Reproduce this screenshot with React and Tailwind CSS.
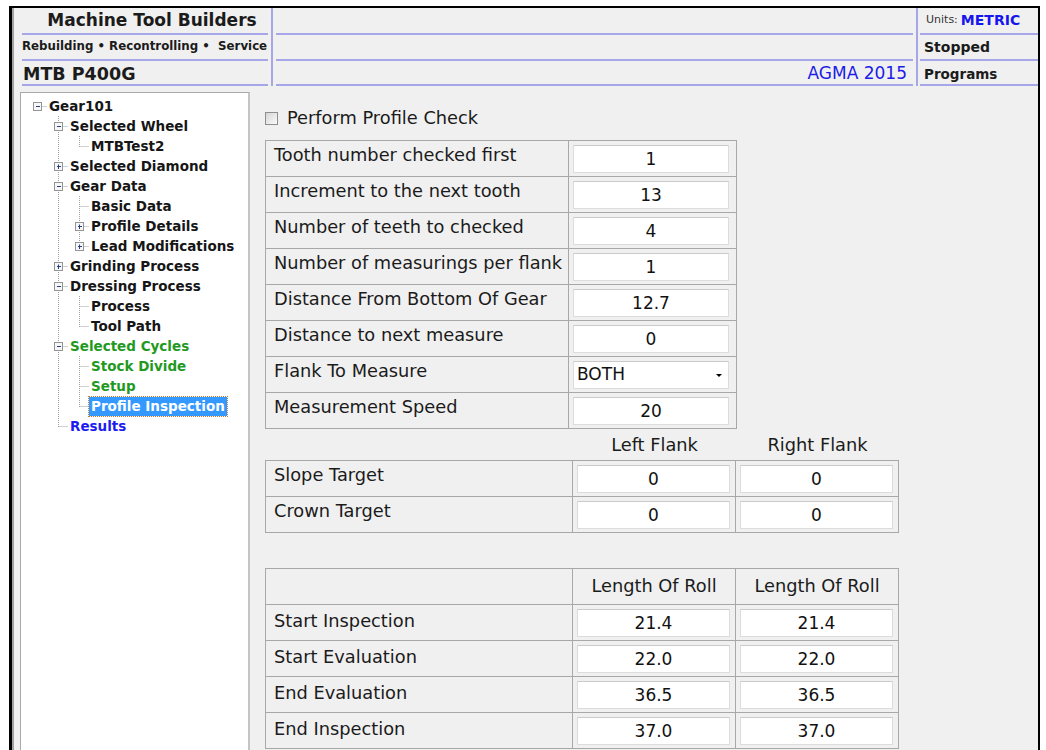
import React from "react";

// nodes of the job tree; `open` is set only on nodes that have children
const tree = [
  { label: "Gear101", depth: 0, open: true },
  { label: "Selected Wheel", depth: 1, open: true },
  { label: "MTBTest2", depth: 2, last: true },
  { label: "Selected Diamond", depth: 1, open: false },
  { label: "Gear Data", depth: 1, open: true },
  { label: "Basic Data", depth: 2 },
  { label: "Profile Details", depth: 2, open: false },
  { label: "Lead Modifications", depth: 2, open: false, last: true },
  { label: "Grinding Process", depth: 1, open: false },
  { label: "Dressing Process", depth: 1, open: true },
  { label: "Process", depth: 2 },
  { label: "Tool Path", depth: 2, last: true },
  { label: "Selected Cycles", depth: 1, open: true, tone: "green" },
  { label: "Stock Divide", depth: 2, tone: "green" },
  { label: "Setup", depth: 2, tone: "green" },
  { label: "Profile Inspection", depth: 2, last: true, selected: true },
  { label: "Results", depth: 1, last: true, tone: "blue" },
];

const checks = [
  ["Tooth number checked first", "1"],
  ["Increment to the next tooth", "13"],
  ["Number of teeth to checked", "4"],
  ["Number of measurings per flank", "1"],
  ["Distance From Bottom Of Gear", "12.7"],
  ["Distance to next measure", "0"],
  ["Flank To Measure", "BOTH", true],
  ["Measurement Speed", "20"],
];

const targets = [
  ["Slope Target", "0", "0"],
  ["Crown Target", "0", "0"],
];

const rolls = [
  ["Start Inspection", "21.4", "21.4"],
  ["Start Evaluation", "22.0", "22.0"],
  ["End Evaluation", "36.5", "36.5"],
  ["End Inspection", "37.0", "37.0"],
];

const col = (l) => 16 + 21 * l;

function Gutter({ depth, open, last }) {
  const cx = col(depth);
  const c = cx + 0.5;
  const w = cx + 10;
  const dots = { stroke: "#a3a3a3", strokeWidth: 1, strokeDasharray: "1 1" };
  return (
    <svg width={w} height="20" className="shrink-0">
      {depth >= 2 && <line x1={col(1) + 0.5} y1="0" x2={col(1) + 0.5} y2="20" {...dots} />}
      {depth >= 1 && <line x1={c} y1="0" x2={c} y2={last ? 11 : 20} {...dots} />}
      <line x1={c} y1="10.5" x2={w} y2="10.5" {...dots} />
      {open !== undefined && (
        <g>
          <rect x={cx - 3.5} y="6.5" width="8" height="8" fill="#f6f6f6" stroke="#959595" />
          <line x1={cx - 1} y1="10.5" x2={cx + 3} y2="10.5" stroke="#27408b" />
          {!open && <line x1={c} y1="8.5" x2={c} y2="13" stroke="#27408b" />}
        </g>
      )}
    </svg>
  );
}

function TreeRow({ node }) {
  const tone =
    node.selected
      ? "bg-[#3399ff] text-white outline-1 outline-dotted outline-[#c87a36]"
      : node.tone === "green"
      ? "text-[#1f9a1f]"
      : node.tone === "blue"
      ? "text-[#1c1cf0]"
      : "text-[#161616]";
  return (
    <div className="flex items-center h-[20px]">
      <Gutter depth={node.depth} open={node.open} last={node.last} />
      <span className={`px-[2px] h-[19px] leading-[19px] whitespace-nowrap ${tone}`}>{node.label}</span>
    </div>
  );
}

function Field({ value, select, wide }) {
  return (
    <div
      className={`h-[28px] ${wide ? "w-[156px]" : "w-[153px]"} bg-white border border-[#dcdcdc] border-t-[#cacaca] flex items-center text-[17px] text-[#111] ${
        select ? "justify-between pl-[3px] pr-[6px]" : "justify-center pt-[2px]"
      }`}
    >
      <span>{value}</span>
      {select && <span className="w-0 h-0 border-x-[3px] border-x-transparent border-t-[3px] border-t-black" />}
    </div>
  );
}

function HeaderCell({ children, className }) {
  return (
    <div className={`flex items-center border-b-2 border-[#a6a6e8] ${className}`}>{children}</div>
  );
}

export default function App() {
  return (
    <div className="w-[1046px] h-[750px] overflow-hidden bg-white pt-[6px] pl-[9px] pr-[6px] font-['DejaVu_Sans',sans-serif] text-[#1b1b1b]">
      <div className="h-[744px] border-t-2 border-l-[3px] border-r-2 border-black bg-[#f0f0f0]">
        <div className="h-full border-l-2 border-[#a2a2a2]">
          {/* title bar */}
          <div className="flex h-[78px]">
            <div className="w-[257px] flex flex-col font-bold">
              <HeaderCell className="ml-[8px] mr-[3px] h-[27px] justify-center pl-[14px] text-[17px]">
                Machine Tool Builders
              </HeaderCell>
              <HeaderCell className="ml-[8px] mr-[3px] h-[26px] text-[11.8px] whitespace-pre">
                {"Rebuilding • Recontrolling •  Service"}
              </HeaderCell>
              <HeaderCell className="ml-[8px] mr-[3px] h-[25px] pt-[3px] pl-[1px] text-[17.5px]">
                MTB P400G
              </HeaderCell>
            </div>
            <div className="w-[2px] bg-[#a6a6e8]" />
            <div className="flex-1 flex flex-col">
              <HeaderCell className="mx-[3px] h-[27px]" />
              <HeaderCell className="mx-[3px] h-[26px]" />
              <HeaderCell className="mx-[3px] h-[25px] pt-[3px] justify-end pr-[6px] text-[17px] text-[#1c1ce8]">
                AGMA 2015
              </HeaderCell>
            </div>
            <div className="w-[2px] bg-[#a6a6e8]" />
            <div className="w-[120px] flex flex-col">
              <HeaderCell className="ml-[2px] h-[27px] pl-[6px] gap-[3px]">
                <span className="text-[11px] text-[#333]">Units:</span>
                <span className="text-[14px] font-bold text-[#1515ee]">METRIC</span>
              </HeaderCell>
              <HeaderCell className="ml-[2px] h-[26px] pl-[4px] text-[14px] font-bold">Stopped</HeaderCell>
              <HeaderCell className="ml-[2px] h-[25px] pt-[3px] pl-[4px] text-[13.5px] font-bold">
                Programs
              </HeaderCell>
            </div>
          </div>

          <div className="flex h-[664px]">
            {/* job tree */}
            <div className="ml-[6px] mt-[6px] w-[230px] h-[700px] shrink-0 bg-white border border-[#a9a9a9] border-r-2 border-r-[#c4c4c4] pt-[3px] text-[13.5px] font-bold">
              {tree.map((n) => (
                <TreeRow key={n.label} node={n} />
              ))}
            </div>

            {/* inspection settings */}
            <div className="pl-[15px] pt-[22px] text-[17.8px]">
              <div className="flex items-center h-[20px] gap-[9px]">
                <div className="w-[13px] h-[13px] border border-[#8e8e8e] bg-linear-to-br from-[#d6d6d6] to-[#fbfbfb]" />
                <span>Perform Profile Check</span>
              </div>

              <div className="mt-[12px] w-[472px] border-l border-t border-[#a8a8a8]">
                {checks.map(([label, value, select]) => (
                  <div key={label} className="flex h-[36px]">
                    <div className="w-[303px] border-r border-b border-[#a8a8a8] pl-[8px] pt-[4px] leading-[20px] whitespace-nowrap">
                      {label}
                    </div>
                    <div className="w-[168px] border-r border-b border-[#a8a8a8] pl-[4px] pt-[4px]">
                      <Field value={value} select={select} wide />
                    </div>
                  </div>
                ))}
              </div>

              <div className="mt-[4px] flex h-[24px] items-center">
                <div className="w-[308px]" />
                <div className="w-[163px] text-center">Left Flank</div>
                <div className="w-[163px] text-center">Right Flank</div>
              </div>

              <div className="mt-[3px] w-[634px] border-l border-t border-[#a8a8a8]">
                {targets.map(([label, left, right]) => (
                  <div key={label} className="flex h-[36px]">
                    <div className="w-[307px] border-r border-b border-[#a8a8a8] pl-[8px] pt-[4px] leading-[20px]">
                      {label}
                    </div>
                    <div className="w-[163px] border-r border-b border-[#a8a8a8] pl-[4px] pt-[4px]">
                      <Field value={left} />
                    </div>
                    <div className="w-[163px] border-r border-b border-[#a8a8a8] pl-[4px] pt-[4px]">
                      <Field value={right} />
                    </div>
                  </div>
                ))}
              </div>

              <div className="mt-[35px] w-[634px] border-l border-t border-[#a8a8a8]">
                <div className="flex h-[36px]">
                  <div className="w-[307px] border-r border-b border-[#a8a8a8]" />
                  <div className="w-[163px] border-r border-b border-[#a8a8a8] flex items-center justify-center">
                    Length Of Roll
                  </div>
                  <div className="w-[163px] border-r border-b border-[#a8a8a8] flex items-center justify-center">
                    Length Of Roll
                  </div>
                </div>
                {rolls.map(([label, left, right]) => (
                  <div key={label} className="flex h-[36px]">
                    <div className="w-[307px] border-r border-b border-[#a8a8a8] pl-[8px] pt-[6px] leading-[20px]">
                      {label}
                    </div>
                    <div className="w-[163px] border-r border-b border-[#a8a8a8] pl-[4px] pt-[4px]">
                      <Field value={left} />
                    </div>
                    <div className="w-[163px] border-r border-b border-[#a8a8a8] pl-[4px] pt-[4px]">
                      <Field value={right} />
                    </div>
                  </div>
                ))}
              </div>
            </div>
          </div>
        </div>
      </div>
    </div>
  );
}
